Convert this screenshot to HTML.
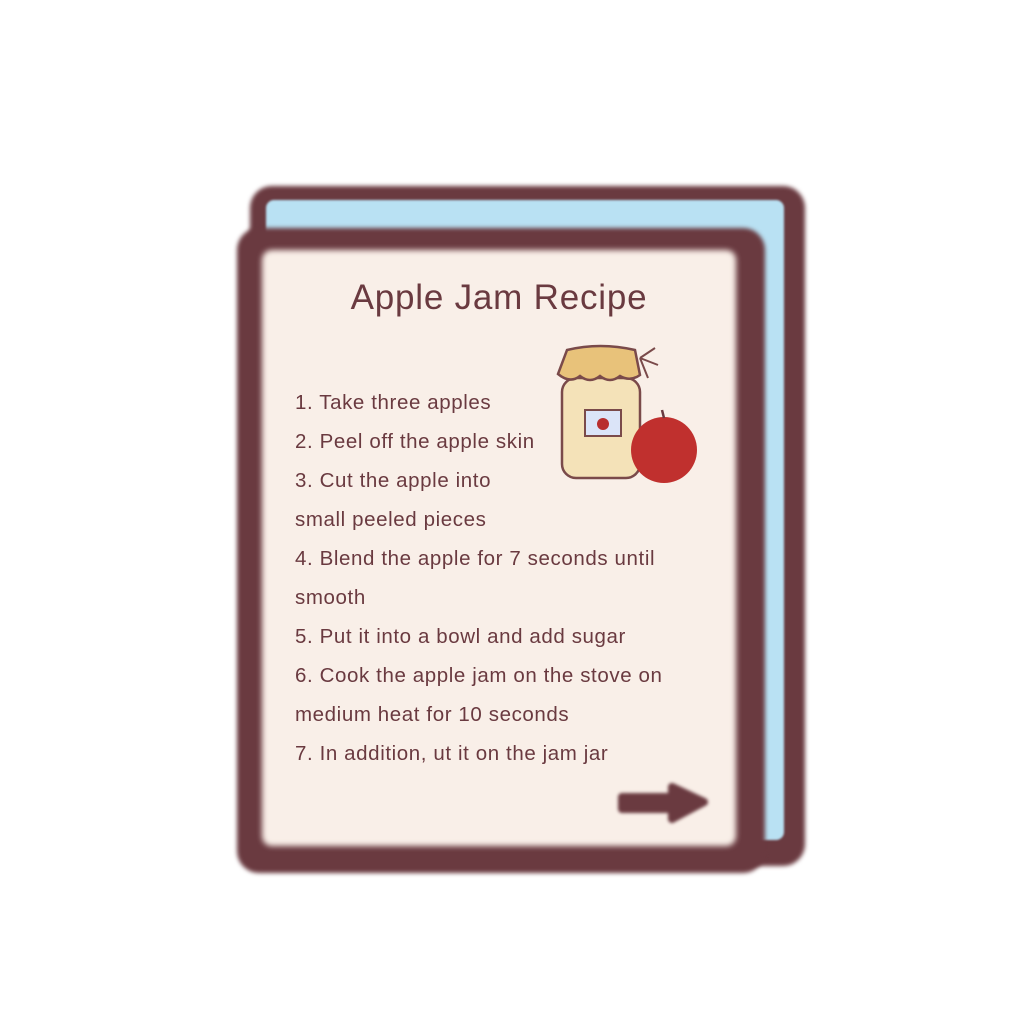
<!DOCTYPE html>
<html><head><style>
body{margin:0;width:1024px;height:1024px;background:#fff;position:relative;overflow:hidden;font-family:"Comic Sans MS","Liberation Sans",sans-serif;}
.a{position:absolute;}
.back{left:250px;top:186px;width:555px;height:680px;background:#6a3a40;border-radius:22px;filter:blur(2px);}
.blue{left:266px;top:200px;width:518px;height:640px;background:#b9e1f3;border-radius:8px;filter:blur(1px);}
.front{left:237px;top:228px;width:528px;height:645px;background:#6a3a40;border-radius:22px;filter:blur(2px);}
.cream{left:262px;top:250px;width:474px;height:596px;background:#f9efe8;border-radius:10px;filter:blur(3px);}
.title{left:262px;width:474px;top:278px;text-align:center;font-size:35px;color:#6a3a40;letter-spacing:0.8px;}
.txt{left:295px;top:383px;font-size:20.5px;line-height:39px;color:#6a3a40;letter-spacing:0.6px;}
</style></head><body>
<div class="a back"></div>
<div class="a blue"></div>
<div class="a front"></div>
<div class="a cream"></div>
<div class="a title">Apple Jam Recipe</div>
<div class="a txt">1. Take three apples<br>2. Peel off the apple skin<br>3. Cut the apple into<br>small peeled pieces<br>4. Blend the apple for 7 seconds until<br>smooth<br>5. Put it into a bowl and add sugar<br>6. Cook the apple jam on the stove on<br>medium heat for 10 seconds<br>7. In addition, ut it on the jam jar</div>
<svg class="a" style="left:540px;top:330px" width="170" height="170" viewBox="0 0 170 170">
<rect x="22" y="48" width="78" height="100" rx="14" fill="#f4e2b8" stroke="#7a4a4a" stroke-width="2.5"/>
<path d="M27 20 Q60 12 95 20 L100 45 Q90 52 80 46 Q70 54 60 46 Q50 54 40 46 Q30 54 18 44 Z" fill="#e8c27a" stroke="#7a4a4a" stroke-width="2.5"/>
<path d="M100 28 L115 18 M100 28 L118 35 M100 28 L108 48" stroke="#7a4a4a" stroke-width="2"/>
<rect x="45" y="80" width="36" height="26" fill="#dbe4f8" stroke="#7a4a4a" stroke-width="2"/>
<circle cx="63" cy="94" r="6" fill="#b82e2e"/>
<circle cx="124" cy="120" r="33" fill="#c0302e"/>
<path d="M124 88 L122 80" stroke="#6a3a40" stroke-width="2.5"/>
</svg>
<svg class="a" style="left:612px;top:775px" width="100" height="60" viewBox="0 0 100 60"><path d="M10 22 L60 22 L60 12 L92 27 L60 44 L60 34 L10 34 Z" fill="#6a3a40" stroke="#6a3a40" stroke-width="8" stroke-linejoin="round" style="filter:blur(1.5px)"/></svg>
</body></html>
